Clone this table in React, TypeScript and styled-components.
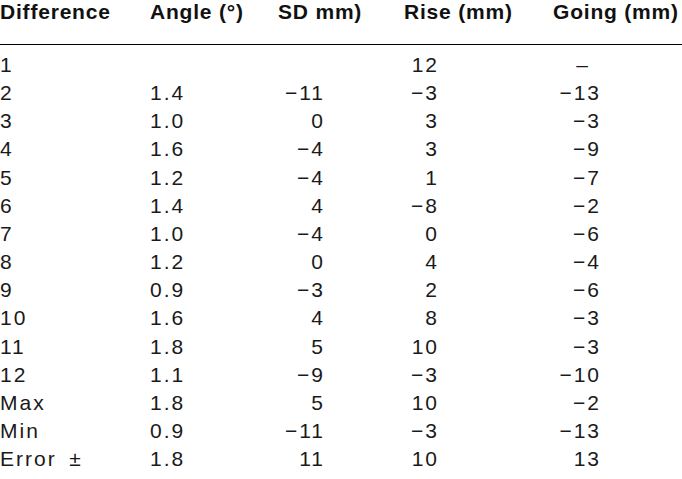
import React from "react";
import styled, { createGlobalStyle } from "styled-components";

const Global = createGlobalStyle`
  html, body { margin: 0; padding: 0; background: #fff; }
  body { font-family: "Liberation Sans", Arial, Helvetica, sans-serif; }
`;

const Table = styled.table`
  width: 682px;
  border-collapse: collapse;
  table-layout: fixed;
  color: #1a1a1a;
`;

const HeadCell = styled.th`
  font-size: 21px;
  font-weight: 700;
  letter-spacing: 0.8px;
  line-height: 24px;
  padding: 0 0 20px 0;
  text-align: left;
  white-space: nowrap;
  color: #111;
  border-bottom: 1.5px solid #000;
`;

const Row = styled.tr<{ $first?: boolean }>`
  & > td {
    padding-top: ${(p) => (p.$first ? "6px" : "0")};
  }
`;

const Cell = styled.td<{ $align: "left" | "right"; $pr: number }>`
  font-size: 21px;
  font-weight: 400;
  letter-spacing: 2px;
  line-height: 28.15px;
  padding-left: 0;
  padding-bottom: 0;
  padding-right: ${(p) => p.$pr}px;
  text-align: ${(p) => p.$align};
  white-space: nowrap;
`;

type ColSpec = { width: number; align: "left" | "right"; pr: number };

const cols: ColSpec[] = [
  { width: 150, align: "left", pr: 0 },
  { width: 128, align: "left", pr: 0 },
  { width: 126, align: "right", pr: 79 },
  { width: 149, align: "right", pr: 114 },
  { width: 129, align: "right", pr: 81 },
];

const headers = ["Difference", "Angle (°)", "SD mm)", "Rise (mm)", "Going (mm)"];

const m = "\u2212";
const rows: string[][] = [
  ["1", "", "", "12", "\u2013"],
  ["2", "1.4", `${m}11`, `${m}3`, `${m}13`],
  ["3", "1.0", "0", "3", `${m}3`],
  ["4", "1.6", `${m}4`, "3", `${m}9`],
  ["5", "1.2", `${m}4`, "1", `${m}7`],
  ["6", "1.4", "4", `${m}8`, `${m}2`],
  ["7", "1.0", `${m}4`, "0", `${m}6`],
  ["8", "1.2", "0", "4", `${m}4`],
  ["9", "0.9", `${m}3`, "2", `${m}6`],
  ["10", "1.6", "4", "8", `${m}3`],
  ["11", "1.8", "5", "10", `${m}3`],
  ["12", "1.1", `${m}9`, `${m}3`, `${m}10`],
  ["Max", "1.8", "5", "10", `${m}2`],
  ["Min", "0.9", `${m}11`, `${m}3`, `${m}13`],
  ["Error\u2002\u00b1", "1.8", "11", "10", "13"],
];

export default function App() {
  return (
    <>
      <Global />
      <Table>
        <colgroup>
          {cols.map((c, i) => (
            <col key={i} style={{ width: c.width }} />
          ))}
        </colgroup>
        <thead>
          <tr>
            {headers.map((h) => (
              <HeadCell key={h}>{h}</HeadCell>
            ))}
          </tr>
        </thead>
        <tbody>
          {rows.map((r, ri) => (
            <Row key={ri} $first={ri === 0}>
              {r.map((v, ci) => {
                const dash = v === "\u2013";
                return (
                  <Cell
                    key={ci}
                    $align={cols[ci].align}
                    $pr={dash ? cols[ci].pr + 11 : cols[ci].pr}
                  >
                    {v}
                  </Cell>
                );
              })}
            </Row>
          ))}
        </tbody>
      </Table>
    </>
  );
}
